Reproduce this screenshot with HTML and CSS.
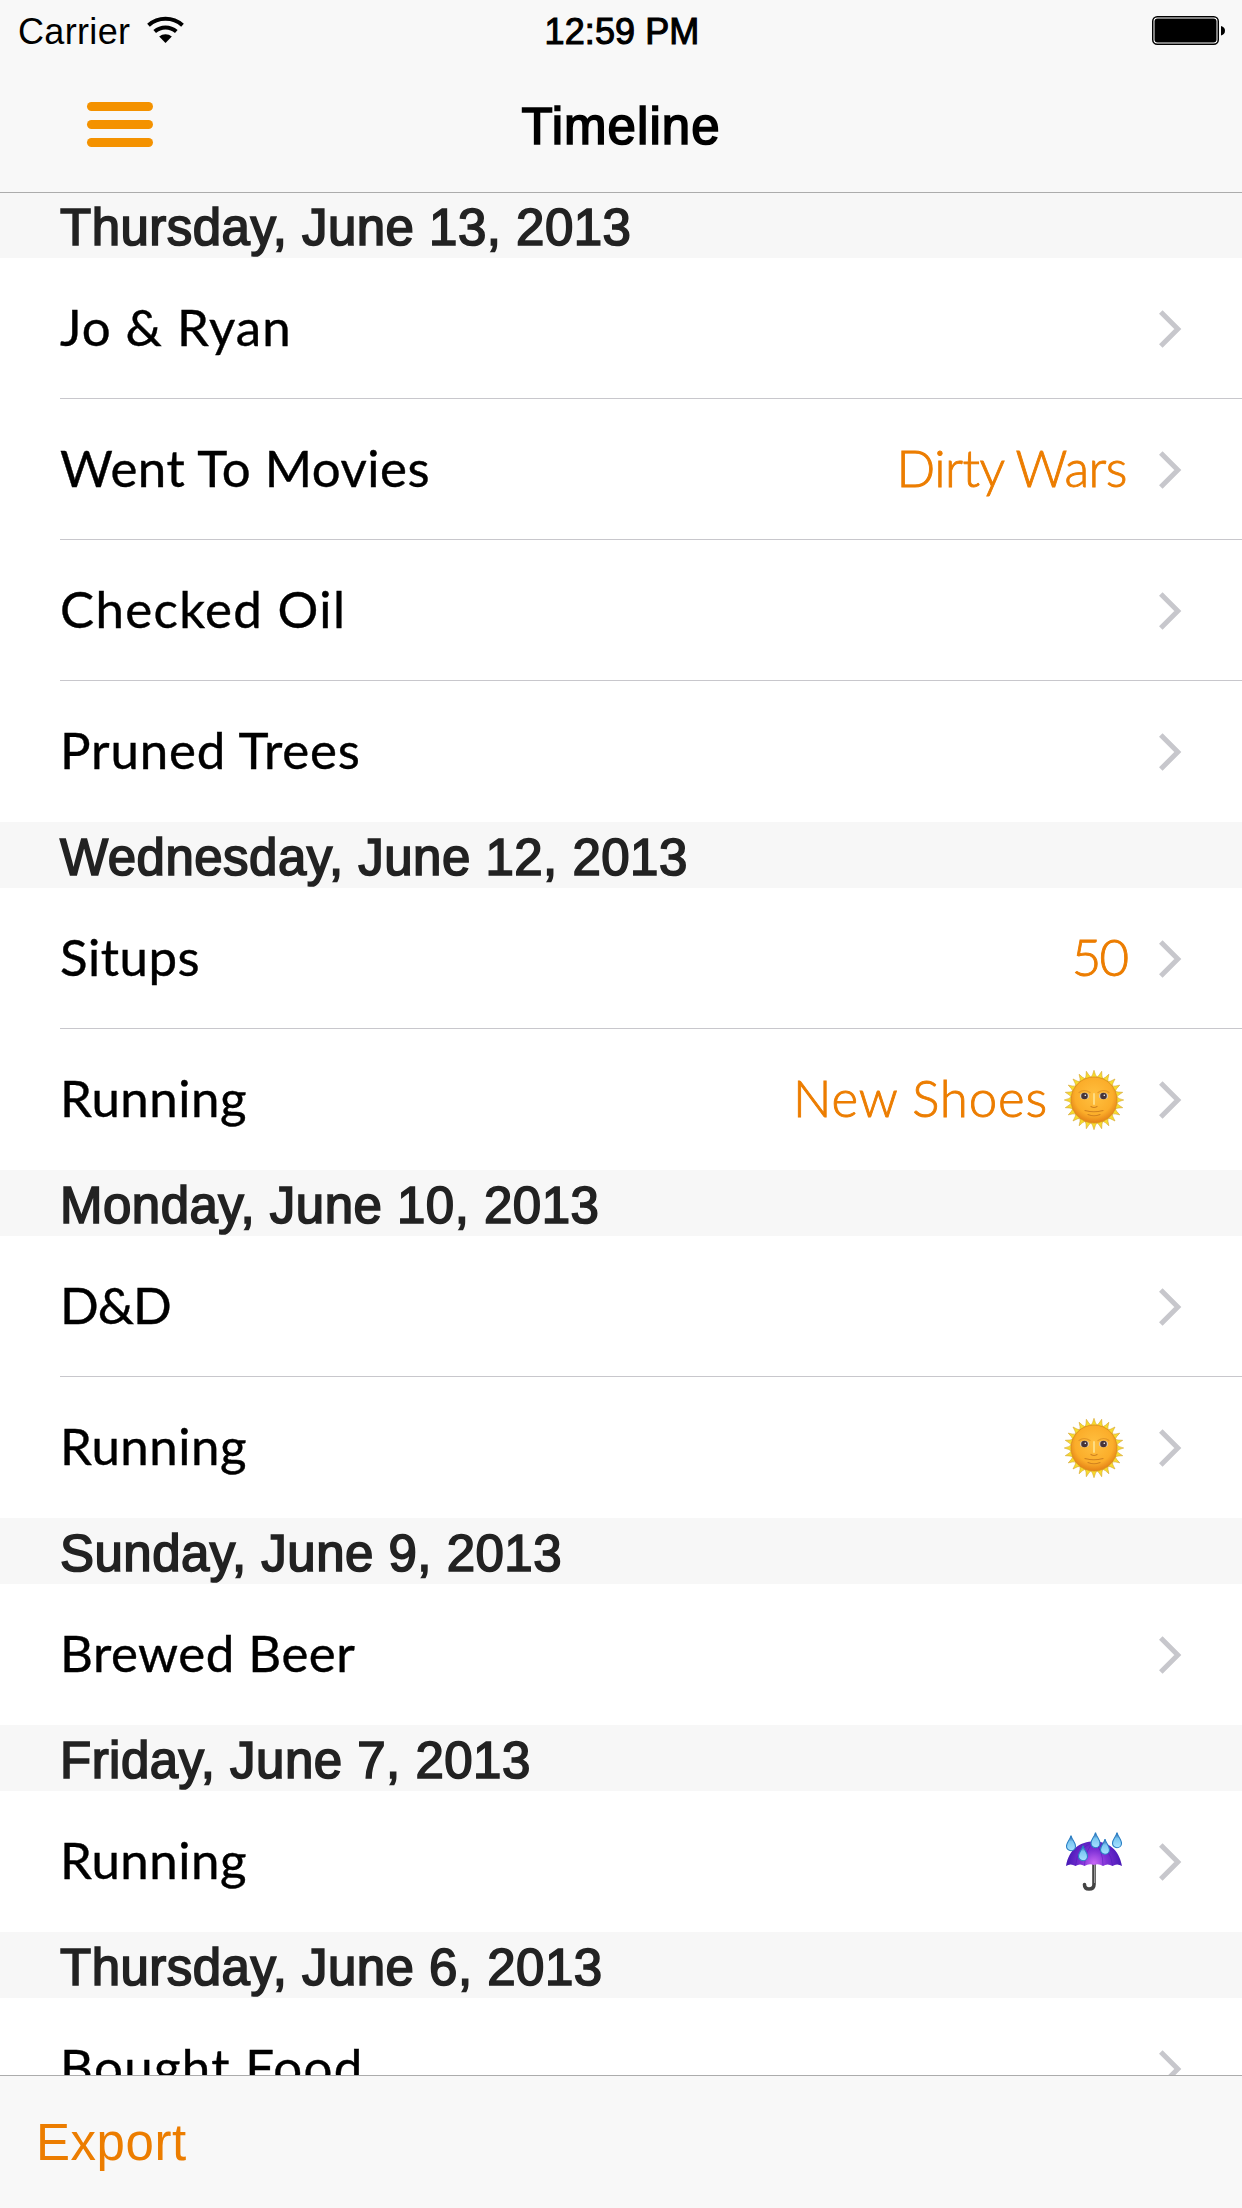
FILE: index.html
```html
<!DOCTYPE html>
<html lang="en">
<head>
<meta charset="utf-8">
<title>Timeline</title>
<link rel="stylesheet" href="styles.css">
</head>
<body>
<svg class="defs" aria-hidden="true">
  <defs>
    <radialGradient id="face" cx="50%" cy="42%" r="55%">
      <stop offset="0" stop-color="#ffc040"/><stop offset=".75" stop-color="#fbad2a"/><stop offset="1" stop-color="#e8891a"/>
    </radialGradient>
    <radialGradient id="canopy" gradientUnits="userSpaceOnUse" cx="28" cy="31" r="28">
      <stop offset="0" stop-color="#c767f5"/><stop offset=".45" stop-color="#7e31d6"/><stop offset="1" stop-color="#4417b4"/>
    </radialGradient>
    <linearGradient id="water" x1="0" y1="0" x2="0" y2="1">
      <stop offset="0" stop-color="#1b4f9c"/><stop offset=".4" stop-color="#7cc8f2"/><stop offset="1" stop-color="#a8e2ff"/>
    </linearGradient>
    <symbol id="chevron" viewBox="0 0 24 40"><path d="M2.8 3 19.8 20 2.8 37" fill="none" stroke="#c7c7cc" stroke-width="5"/></symbol>
    <path id="ray" d="M26.200 8.500 Q29 5 30 .3 Q31 5 33.800 8.500Z"/>
    <g id="rays4"><use href="#ray"/><use href="#ray" transform="rotate(90 30 30)"/><use href="#ray" transform="rotate(180 30 30)"/><use href="#ray" transform="rotate(270 30 30)"/></g>
    <symbol id="sun" viewBox="0 0 60 60">
      <g fill="#f7dc2c" stroke="#d8a836" stroke-width=".6">
        <use href="#rays4"/><use href="#rays4" transform="rotate(15 30 30)"/><use href="#rays4" transform="rotate(30 30 30)"/>
        <use href="#rays4" transform="rotate(45 30 30)"/><use href="#rays4" transform="rotate(60 30 30)"/><use href="#rays4" transform="rotate(75 30 30)"/>
      </g>
      <circle cx="30" cy="30" r="23" fill="url(#face)" stroke="#d98a1e" stroke-width=".8"/>
      <g fill="#d9c9b4"><ellipse cx="20.5" cy="26" rx="4.600" ry="3.200"/><ellipse cx="39.5" cy="26" rx="4.600" ry="3.200"/></g>
      <g fill="#46343a"><circle cx="20.5" cy="26" r="3.300"/><circle cx="39.5" cy="26" r="3.300"/></g>
      <g fill="#fff"><circle cx="21.300" cy="25.200" r=".8"/><circle cx="40.300" cy="25.200" r=".8"/></g>
      <g fill="none" stroke="#d08220" stroke-width="1.2" stroke-linecap="round">
        <path d="M15 22.500Q20 18.500 26 22.500M34 22.500Q40 18.500 45 22.500" opacity=".6"/><path d="M21 40.500Q30 43 39 40.500M24 44.500Q30 47 36 44.500M27 36.500Q30 38.500 33 36.500"/>
      </g>
      <path d="M30 24v10" stroke="#ffdc80" stroke-width="2" stroke-linecap="round"/>
    </symbol>
    <path id="drop" d="M5 .5C6 5 9.500 7.500 9.500 11.200A4.500 4.500 0 0 1 .5 11.200C.5 7.500 4 5 5 .5Z" fill="url(#water)" stroke="#2b7fc4" stroke-width="1.100"/>
    <symbol id="umbrella" viewBox="0 0 56 60">
      <path d="M28 30V52.500Q28 57 23 57Q18.500 57 18.500 52.500" fill="none" stroke="#444" stroke-width="3.600" stroke-linecap="round"/>
      <path d="M28.500 32V51" stroke="#999" stroke-width="1"/>
      <path d="M0 34C3 17 14 9.500 28 9.500S53 17 56 34Q51 31 46.500 34Q41.500 31 37 34Q32.500 31 28 33Q23 31 18.500 34Q14 31 9.500 34Q4.500 31 0 34Z" fill="url(#canopy)"/>
      <path d="M28 10Q19 18 18.500 33.500M28 10Q37 18 37 33.500M28 10Q11 16 9.500 33.500M28 10Q45 16 46.500 33.500" fill="none" stroke="#4a1bb5" stroke-width=".8" opacity=".6"/>
      <use href="#drop" y="3"/><use href="#drop" x="24.500"/><use href="#drop" x="46"/><use href="#drop" x="12" y="13"/><use href="#drop" x="34" y="6.500"/>
    </symbol>
  </defs>
</svg>

<div class="screen">
  <header class="top">
    <div class="status">
      <div class="carrier"><span>Carrier</span>
        <svg class="wifi" viewBox="0 0 38 28"><g fill="none" stroke="#000" stroke-width="4"><path d="M1.500 9.200A25.500 25.500 0 0 1 35.500 9.200"/><path d="M7.700 15.600A16.500 16.500 0 0 1 29.300 15.600"/></g><path d="M12.200 20.600A9.500 9.500 0 0 1 24.800 20.600L18.500 27Z"/></svg>
      </div>
      <span class="clock">12:59 PM</span>
      <svg class="battery" viewBox="0 0 74 30"><rect x=".75" y=".75" width="65.500" height="27.500" rx="4.500" fill="#fff" stroke="#000" stroke-width="1.500"/><rect x="2.500" y="2.500" width="62" height="24" rx="3"/><path d="M69 10Q73 11 73 14.750T69 19.500Z"/></svg>
    </div>
    <nav class="bar">
      <button class="menu" aria-label="Menu"><span></span><span></span><span></span></button>
      <h1>Timeline</h1>
    </nav>
  </header>

  <main class="list">
    <section>
      <h2>Thursday, June 13, 2013</h2>
      <div class="row"><span class="name t-wide">Jo &amp; Ryan</span><svg class="chevron"><use href="#chevron"/></svg></div>
      <div class="row"><span class="name t-open">Went To Movies</span><span class="value t-tight">Dirty Wars</span><svg class="chevron"><use href="#chevron"/></svg></div>
      <div class="row"><span class="name t-wider">Checked Oil</span><svg class="chevron"><use href="#chevron"/></svg></div>
      <div class="row"><span class="name t-mid">Pruned Trees</span><svg class="chevron"><use href="#chevron"/></svg></div>
    </section>
    <section>
      <h2>Wednesday, June 12, 2013</h2>
      <div class="row"><span class="name t-open">Situps</span><span class="value t-digits">50</span><svg class="chevron"><use href="#chevron"/></svg></div>
      <div class="row"><span class="name t-open">Running</span><span class="value t-mid">New Shoes</span><svg class="emoji"><use href="#sun"/></svg><svg class="chevron"><use href="#chevron"/></svg></div>
    </section>
    <section>
      <h2>Monday, June 10, 2013</h2>
      <div class="row"><span class="name t-tight">D&amp;D</span><svg class="chevron"><use href="#chevron"/></svg></div>
      <div class="row"><span class="name t-open">Running</span><svg class="emoji"><use href="#sun"/></svg><svg class="chevron"><use href="#chevron"/></svg></div>
    </section>
    <section>
      <h2>Sunday, June 9, 2013</h2>
      <div class="row"><span class="name t-open">Brewed Beer</span><svg class="chevron"><use href="#chevron"/></svg></div>
    </section>
    <section>
      <h2>Friday, June 7, 2013</h2>
      <div class="row"><span class="name t-open">Running</span><svg class="emoji umbrella"><use href="#umbrella"/></svg><svg class="chevron"><use href="#chevron"/></svg></div>
    </section>
    <section>
      <h2>Thursday, June 6, 2013</h2>
      <div class="row"><span class="name t-wider">Bought Food</span><svg class="chevron"><use href="#chevron"/></svg></div>
    </section>
  </main>

  <footer class="toolbar"><a class="export">Export</a></footer>
</div>
</body>
</html>
```
FILE: styles.css
```css
* { box-sizing: border-box; margin: 0; padding: 0; }
body { width: 1242px; height: 2208px; overflow: hidden; background: #fff; color: #000; font-family: "Liberation Sans", Arial, sans-serif; }
.defs { display: block; width: 0; height: 0; }
.screen { display: flex; flex-direction: column; height: 2208px; }

.top { flex: none; height: 193px; background: #f8f8f8; border-bottom: 1px solid #acacac; }
.status { display: grid; grid-template-columns: 1fr auto 1fr; align-items: center; height: 60px; padding: 3px 16px 0 18px; font-size: 36px; }
.carrier { display: flex; align-items: center; gap: 17px; letter-spacing: .33px; }
.wifi { width: 38px; height: 28px; margin-top: -3px; }
.clock { letter-spacing: .1px; -webkit-text-stroke: 1.1px #000; }
.battery { justify-self: end; width: 74px; height: 30px; margin-top: -1px; }
.bar { display: grid; grid-template-columns: 1fr auto 1fr; align-items: center; height: 132px; padding: 0 87px; }
.bar h1 { font-size: 51px; font-weight: 400; letter-spacing: 1.05px; -webkit-text-stroke: 1.7px #000; }
.menu { display: flex; flex-direction: column; gap: 9px; width: 66px; padding-bottom: 4px; border: 0; background: none; }
.menu span { height: 9px; border-radius: 4.5px; background: #f49200; }

.list { flex: 1; min-height: 0; overflow: hidden; }
h2 { height: 66px; padding: 5px 60px 0; background: #f7f7f7; color: #222; font-size: 51px; line-height: 61px; font-weight: 400; letter-spacing: .48px; white-space: nowrap; -webkit-text-stroke: 1.7px #222; }
section:first-child h2 { height: 65px; padding-top: 4px; }
.row { display: flex; align-items: center; height: 141px; margin-left: 60px; padding: 1px 60px 0 0; border-bottom: 1px solid #c8c7cc; }
.row:last-child { border-bottom-color: transparent; }
.name { flex: 1; padding-bottom: 5px; font: 400 51px Lato, sans-serif; letter-spacing: .25px; -webkit-text-stroke: .4px #000; }
.value { padding-bottom: 5px; color: #ec7d00; font: 300 51px Lato, sans-serif; -webkit-text-stroke: .9px #ec7d00; }
.chevron { width: 24px; height: 40px; margin-left: 31px; }
.emoji { width: 60px; height: 60px; margin-left: 16px; margin-right: 3px; }
.emoji.umbrella { width: 56px; margin-right: 5px; }

.t-tight { letter-spacing: -.5px; }
.name.t-tight { letter-spacing: -1px; }
.t-digits { letter-spacing: -2px; }
.t-open { letter-spacing: .5px; }
.t-mid { letter-spacing: .85px; }
.t-wide { letter-spacing: 1px; }
.t-wider { letter-spacing: 1.35px; }

.toolbar { flex: none; display: flex; align-items: center; height: 133px; padding: 0 36px; background: #f8f8f8; border-top: 1px solid #acacac; }
.export { color: #ec7d00; font-size: 51px; letter-spacing: .55px; }
```
